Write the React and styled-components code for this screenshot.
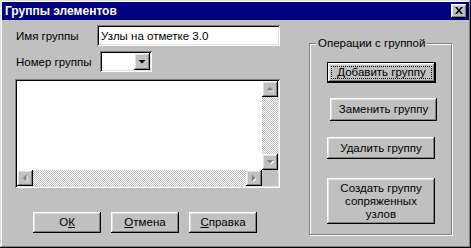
import React from 'react'
import styled, { createGlobalStyle, css } from 'styled-components'

const GlobalStyle = createGlobalStyle`
  html, body {
    margin: 0;
    padding: 0;
    background: #c0c0c0;
  }
  body {
    font-family: 'Liberation Sans', Arial, sans-serif;
    font-size: 11.5px;
    color: #000;
  }
`

const raised = css`
  box-shadow: inset -1px -1px 0 #000, inset 1px 1px 0 #fff,
    inset -2px -2px 0 #808080, inset 2px 2px 0 #dfdfdf;
`
const sunken = css`
  box-shadow: inset 1px 1px 0 #808080, inset -1px -1px 0 #fff,
    inset 2px 2px 0 #000, inset -2px -2px 0 #dfdfdf;
`

const Window = styled.div`
  width: 471px;
  height: 248px;
  box-sizing: border-box;
  padding: 2px;
  background: #c0c0c0;
  box-shadow: inset -1px -1px 0 #000, inset 1px 1px 0 #dfdfdf,
    inset -2px -2px 0 #808080, inset 2px 2px 0 #fff;
  display: flex;
  flex-direction: column;
`
const TitleBar = styled.div`
  height: 18px;
  background: #000080;
  display: flex;
  align-items: center;
  justify-content: space-between;
  padding: 0 2px 0 3px;
  color: #fff;
  font-weight: bold;
  font-size: 12px;
`
const CloseButton = styled.div`
  width: 16px;
  height: 14px;
  box-sizing: border-box;
  background: #c0c0c0;
  ${raised};
  display: flex;
  align-items: center;
  justify-content: center;
  padding-bottom: 1px;
`
const Body = styled.div`
  display: flex;
  padding: 5px 0 0 13px;
`
const LeftCol = styled.div`
  width: 265px;
  display: flex;
  flex-direction: column;
`
const FieldRow = styled.div`
  display: flex;
  align-items: center;
  height: 21px;
  margin-top: ${p => p.$mt || 0}px;
`
const Label = styled.span`
  width: 83px;
  padding-left: 1px;
`
const TextInput = styled.div`
  width: 187px;
  height: 21px;
  box-sizing: border-box;
  background: #fff;
  ${sunken};
  padding: 0 4px;
  display: flex;
  align-items: center;
`
const Combo = styled.div`
  width: 52px;
  height: 21px;
  margin-left: 1px;
  box-sizing: border-box;
  background: #fff;
  ${sunken};
  padding: 2px;
  display: flex;
  justify-content: flex-end;
`
const DropButton = styled.div`
  width: 16px;
  height: 17px;
  box-sizing: border-box;
  background: #c0c0c0;
  ${raised};
  display: flex;
  align-items: center;
  justify-content: center;
`
const ListBox = styled.div`
  margin-top: 7px;
  width: 265px;
  height: 109px;
  box-sizing: border-box;
  padding: 2px;
  background: #fff;
  ${sunken};
  display: grid;
  grid-template-columns: 1fr 16px;
  grid-template-rows: 1fr 16px;
`
const ScrollV = styled.div`
  display: flex;
  flex-direction: column;
`
const ScrollH = styled.div`
  display: flex;
`
const Track = styled.div`
  flex: 1;
  background-color: #fff;
  background-image: repeating-conic-gradient(#c0c0c0 0 25%, #fff 0 50%);
  background-size: 2px 2px;
`
const ScrollButton = styled.div`
  width: 16px;
  height: 16px;
  box-sizing: border-box;
  background: #c0c0c0;
  ${raised};
  display: flex;
  align-items: center;
  justify-content: center;
`
const Corner = styled.div`
  background: #c0c0c0;
`
const ButtonRow = styled.div`
  display: flex;
  gap: 10px;
  margin-top: 24px;
  padding-left: 18px;
`
const Button = styled.div`
  position: relative;
  width: ${p => p.$w}px;
  height: ${p => p.$h}px;
  margin-left: ${p => p.$ml || 0}px;
  margin-top: ${p => p.$mt || 0}px;
  box-sizing: border-box;
  background: #c0c0c0;
  ${raised};
  display: flex;
  align-items: center;
  justify-content: center;
  text-align: center;
  line-height: 13px;
  ${p => p.$default && css`
    box-shadow: inset 0 0 0 1px #000, inset -2px -2px 0 #000, inset 2px 2px 0 #fff,
      inset -3px -3px 0 #808080, inset 3px 3px 0 #dfdfdf;
    &::after {
      content: '';
      position: absolute;
      inset: 4px;
      border: 1px dotted #000;
    }
  `}
  u {
    text-decoration: underline;
  }
`
const GroupBox = styled.div`
  position: relative;
  margin: 18px 0 0 29px;
  width: 143px;
  height: 192px;
  box-sizing: border-box;
  border: 1px solid #808080;
  box-shadow: 1px 1px 0 #fff, inset 1px 1px 0 #fff;
  display: flex;
  flex-direction: column;
  align-items: flex-start;
`
const Legend = styled.span`
  position: absolute;
  top: -7px;
  left: 6px;
  padding: 0 2px;
  background: #c0c0c0;
  line-height: 13px;
`

const Arrow = ({ dir, disabled }) => {
  const shapes = {
    up: '3.5,0 0,3.5 7,3.5',
    down: '0,0 7,0 3.5,3.5',
    left: '3.5,0 3.5,7 0,3.5',
    right: '0,0 0,7 3.5,3.5',
  }
  const pts = shapes[dir]
  return (
    <svg width="8" height="8" viewBox="-0.5 -0.5 8 8">
      <g transform={dir === 'up' || dir === 'down' ? 'translate(0,1.5)' : 'translate(1.5,0)'}>
        {disabled && <polygon points={pts} fill="#fff" transform="translate(1,1)" />}
        <polygon points={pts} fill={disabled ? '#808080' : '#000'} />
      </g>
    </svg>
  )
}

export default function App() {
  return (
    <>
      <GlobalStyle />
      <Window>
        <TitleBar>
          <span>Группы элементов</span>
          <CloseButton>
            <svg width="8" height="7" viewBox="0 0 8 7">
              <path d="M0 0h2l2 2.5L6 0h2L5 3.5 8 7H6L4 4.5 2 7H0l3-3.5z" fill="#000" />
            </svg>
          </CloseButton>
        </TitleBar>
        <Body>
          <LeftCol>
            <FieldRow>
              <Label>Имя группы</Label>
              <TextInput>Узлы на отметке 3.0</TextInput>
            </FieldRow>
            <FieldRow $mt={5}>
              <Label>Номер группы</Label>
              <Combo>
                <DropButton><Arrow dir="down" /></DropButton>
              </Combo>
            </FieldRow>
            <ListBox>
              <div />
              <ScrollV>
                <ScrollButton><Arrow dir="up" disabled /></ScrollButton>
                <Track />
                <ScrollButton><Arrow dir="down" disabled /></ScrollButton>
              </ScrollV>
              <ScrollH>
                <ScrollButton><Arrow dir="left" disabled /></ScrollButton>
                <Track />
                <ScrollButton><Arrow dir="right" disabled /></ScrollButton>
              </ScrollH>
              <Corner />
            </ListBox>
            <ButtonRow>
              <Button $w={68} $h={21}>О<u>К</u></Button>
              <Button $w={68} $h={21}><u>О</u>тмена</Button>
              <Button $w={68} $h={21}><u>С</u>правка</Button>
            </ButtonRow>
          </LeftCol>
          <GroupBox>
            <Legend>Операции с группой</Legend>
            <Button $default $w={109} $h={21} $ml={17} $mt={18}>Добавить группу</Button>
            <Button $w={107} $h={23} $ml={20} $mt={15}>Заменить группу</Button>
            <Button $w={108} $h={22} $ml={17} $mt={16}>Удалить группу</Button>
            <Button $w={108} $h={46} $ml={17} $mt={19}>
              Создать группу<br />сопряженных<br />узлов
            </Button>
          </GroupBox>
        </Body>
      </Window>
    </>
  )
}
